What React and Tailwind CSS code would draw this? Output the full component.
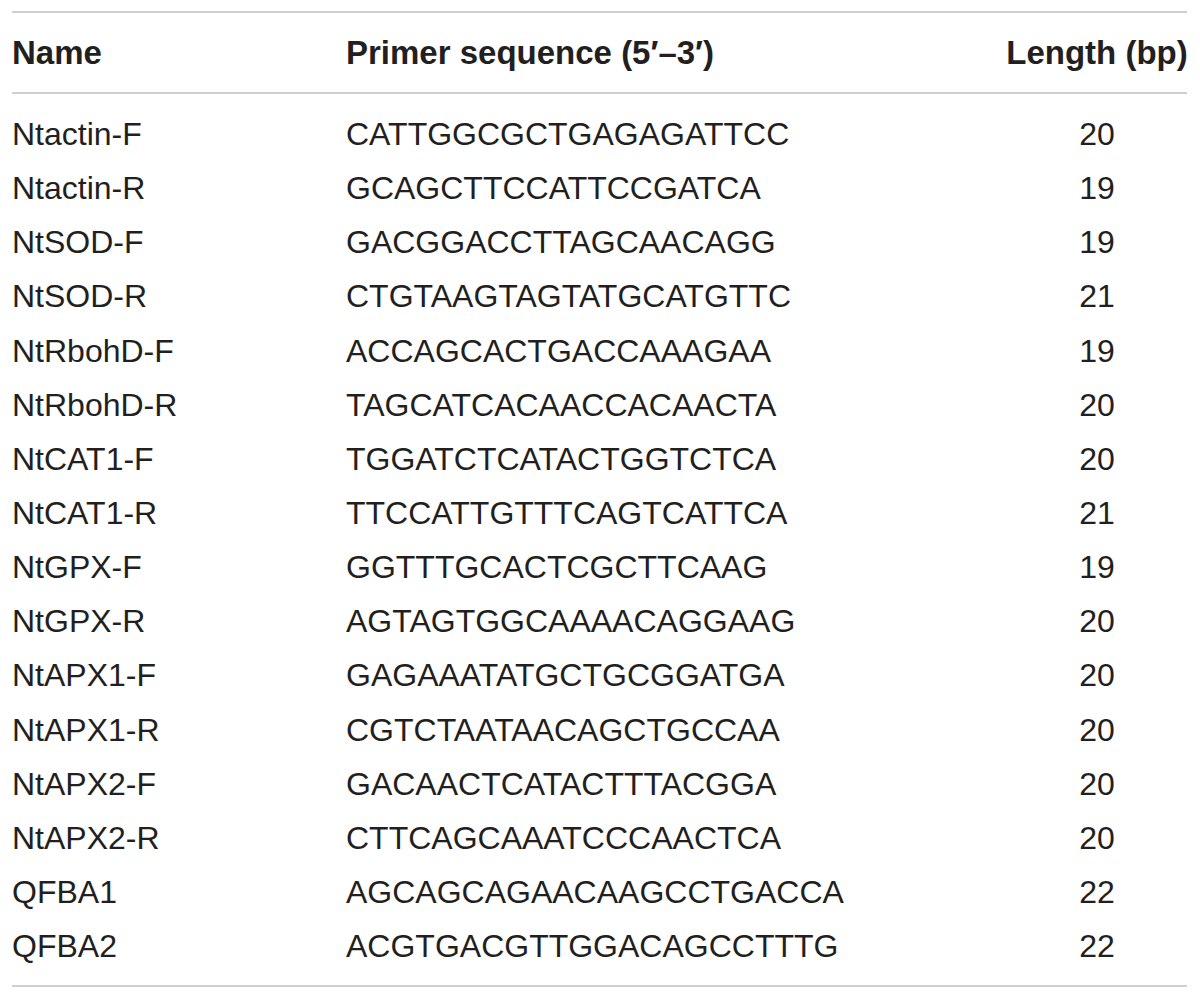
import React from "react";

const rows = [
  ["Ntactin-F", "CATTGGCGCTGAGAGATTCC", "20"],
  ["Ntactin-R", "GCAGCTTCCATTCCGATCA", "19"],
  ["NtSOD-F", "GACGGACCTTAGCAACAGG", "19"],
  ["NtSOD-R", "CTGTAAGTAGTATGCATGTTC", "21"],
  ["NtRbohD-F", "ACCAGCACTGACCAAAGAA", "19"],
  ["NtRbohD-R", "TAGCATCACAACCACAACTA", "20"],
  ["NtCAT1-F", "TGGATCTCATACTGGTCTCA", "20"],
  ["NtCAT1-R", "TTCCATTGTTTCAGTCATTCA", "21"],
  ["NtGPX-F", "GGTTTGCACTCGCTTCAAG", "19"],
  ["NtGPX-R", "AGTAGTGGCAAAACAGGAAG", "20"],
  ["NtAPX1-F", "GAGAAATATGCTGCGGATGA", "20"],
  ["NtAPX1-R", "CGTCTAATAACAGCTGCCAA", "20"],
  ["NtAPX2-F", "GACAACTCATACTTTACGGA", "20"],
  ["NtAPX2-R", "CTTCAGCAAATCCCAACTCA", "20"],
  ["QFBA1", "AGCAGCAGAACAAGCCTGACCA", "22"],
  ["QFBA2", "ACGTGACGTTGGACAGCCTTTG", "22"],
];

export default function App() {
  return (
    <div
      className="w-[1200px] h-[999px] bg-white pt-[11px] pl-[12px] text-[#231f20]"
      style={{ fontFamily: '"Liberation Sans", Arial, sans-serif' }}
    >
      <div className="w-[1175px]">
        <div className="h-[2px] bg-[#cfcfcf]" />
        <div className="grid grid-cols-[334px_1fr_180px] items-center h-[79px] text-[33px] font-bold leading-none">
          <div>Name</div>
          <div>Primer sequence (5′–3′)</div>
          <div className="flex justify-center whitespace-nowrap">Length (bp)</div>
        </div>
        <div className="h-[2px] bg-[#cfcfcf]" />
        <div className="pt-[13px] pb-[12px]">
          {rows.map(([n, s, l]) => (
            <div
              key={n}
              className="grid grid-cols-[334px_1fr_180px] items-center h-[54.15px] text-[32px] leading-none"
            >
              <div>{n}</div>
              <div>{s}</div>
              <div className="text-center">{l}</div>
            </div>
          ))}
        </div>
        <div className="h-[2px] bg-[#cfcfcf]" />
      </div>
    </div>
  );
}
